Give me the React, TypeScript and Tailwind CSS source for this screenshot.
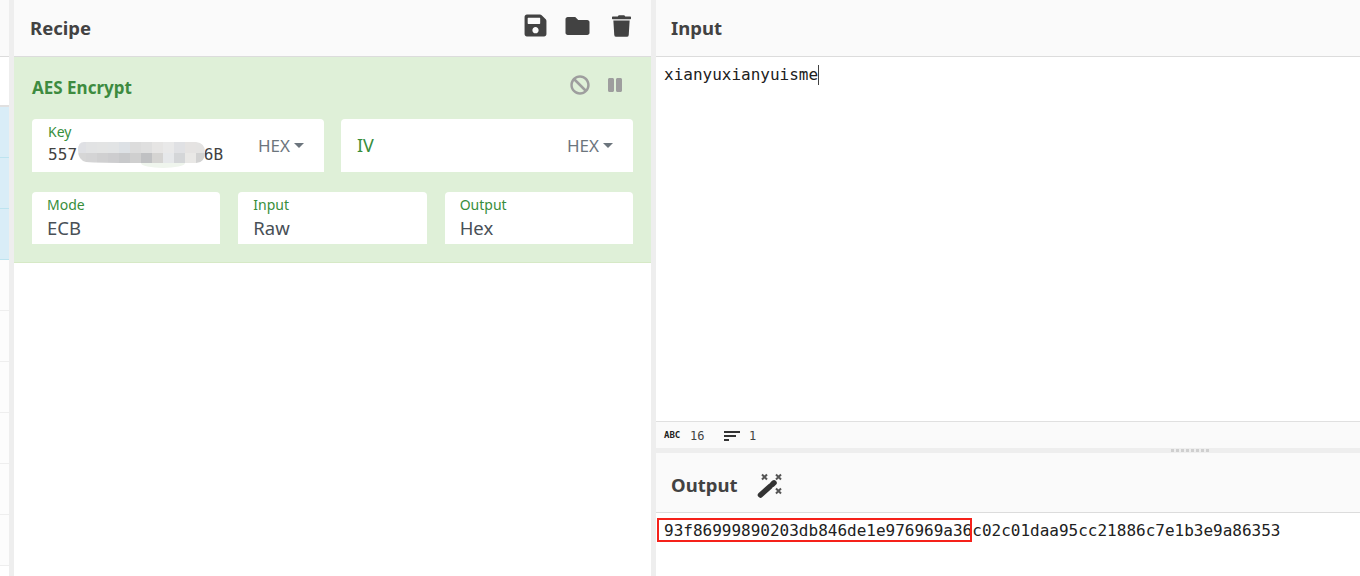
import React from "react";
import { FaSave, FaFolder, FaTrash, FaBan, FaPause } from "react-icons/fa";

const noto = "[font-family:'Noto_Sans','Open_Sans',sans-serif]";
const mono = "[font-family:'DejaVu_Sans_Mono','Liberation_Mono',monospace]";

function Field({ label, value }: { label: string; value: string }) {
  return (
    <div className="flex-1 h-[52px] bg-white rounded-t-[4px] pl-[15px] pt-[3px]">
      <div className="text-[14px] leading-[20px] text-[#388e3c]">{label}</div>
      <div className="text-[18.5px] leading-[26px] text-[#495057]">{value}</div>
    </div>
  );
}

function Hex() {
  return (
    <div className="flex items-center gap-[4px] text-[17px] text-[#6c757d]">
      HEX
      <span className="w-0 h-0 border-x-[5px] border-x-transparent border-t-[5px] border-t-[#6c757d]" />
    </div>
  );
}

function Head({ children, h }: { children: React.ReactNode; h: string }) {
  return (
    <div className={`${h} shrink-0 bg-[#fafafa] border-b border-[#dcdcdc] flex items-center text-[18.5px] font-bold text-[#424242]`}>
      {children}
    </div>
  );
}

const topCells = ["#dfe0e4", "#e2e3e4", "#e3e4e4", "#e2e4e5", "#dde1e5", "#dcdcdc", "#dfdfdf", "#e6e5e4", "#e9e9e9", "#e0e1e4", "#e5e3e2", "#e4e3e2"];
const lowCells = ["#d6d6d6", "#d4d4d5", "#d0d0d1", "#cdcdcf", "#c8c9cb", "#cfcfcf", "#c0c1c3", "#d5d4d2", "#e6e8ea", "#d4d6d8", "#e9e8e6", "#d2d2d2"];

function Mosaic() {
  return (
    <svg className="absolute left-[46px] top-[23px]" width="127" height="26" viewBox="0 0 127 26">
      <ellipse cx="85" cy="21" rx="22" ry="5" fill="#eff5ed" />
      <clipPath id="mosaic-clip">
        <path d="M6 0H118Q127 1 127 10Q127 21 118 21H60Q20 21 8 20Q0 18 0 8Q0 0 6 0Z" />
      </clipPath>
      <g clipPath="url(#mosaic-clip)">
        {topCells.map((c, i) => (
          <rect key={i} x={i * 11 - 3} y="0" width="11" height="11" fill={c} />
        ))}
        {lowCells.map((c, i) => (
          <rect key={i} x={i * 11 - 3} y="11" width="11" height="11" fill={c} />
        ))}
      </g>
    </svg>
  );
}

function Wand() {
  const star = (x: number, y: number) => (
    <path d={`M${x - 2.5} ${y - 2.5}L${x + 2.5} ${y + 2.5}M${x + 2.5} ${y - 2.5}L${x - 2.5} ${y + 2.5}`} stroke="#555555" strokeWidth="2" />
  );
  return (
    <svg className="ml-[20px]" width="26" height="26" viewBox="0 0 26 26">
      {star(7.5, 5)}
      {star(21.5, 5)}
      {star(21.5, 19)}
      <path d="M3.5 23L13 14.5" stroke="#333333" strokeWidth="5.5" strokeLinecap="round" />
      <path d="M15.5 12.2L17 10.8" stroke="#333333" strokeWidth="5.5" strokeLinecap="round" />
    </svg>
  );
}

export default function App() {
  const rows = [true, true, true, false, false, false, false, false, false];
  const dots = [0, 1, 2, 3, 4, 5, 6, 7];
  return (
    <div className={`${noto} w-[1360px] h-[576px] overflow-hidden flex bg-white`}>
      <div className="w-[9px] flex flex-col">
        <div className="h-[57px] shrink-0 bg-[#fafafa] border-b border-[#dcdcdc]" />
        <div className="h-[50px] shrink-0 bg-white border-b-[2px] border-[#e0e0e0]" />
        {rows.map((blue, i) => (
          <div
            key={i}
            className={`h-[51px] shrink-0 border-b ${blue ? "bg-[#d9edf7] border-[#bde3ef]" : "bg-[#fcfcfc] border-[#eeeeee]"}`}
          />
        ))}
      </div>
      <div className="w-[5px] bg-[#eeeeee]" />
      <div className="w-[637px] flex flex-col">
        <Head h="h-[57px] pl-[16px]">
          <span className="flex-1">Recipe</span>
          <div className="flex items-center pr-[20px] mb-[5px]">
            <FaSave className="w-[25px] h-[25px] text-[#424242]" />
            <FaFolder className="ml-[16px] w-[27px] h-[24px] text-[#424242]" />
            <FaTrash className="ml-[21px] w-[19px] h-[24px] text-[#424242]" />
          </div>
        </Head>
        <div className="h-[206px] shrink-0 bg-[#dff0d8] border-b border-[#d6e9c6] px-[18px] pt-[16px]">
          <div className="h-[30px] flex items-center">
            <span className="flex-1 text-[17px] font-bold text-[#3d8b40]">AES Encrypt</span>
            <div className="flex items-center gap-[18px] pr-[11px] mb-[6px] text-[#9e9e9e]">
              <FaBan className="w-[20px] h-[20px]" />
              <FaPause className="w-[14px] h-[16px]" />
            </div>
          </div>
          <div className="flex gap-[17px] mt-[16px]">
            <div className="relative flex-1 h-[53px] bg-white rounded-t-[4px] flex items-center justify-between pl-[16px] pr-[20px]">
              <div className="self-start pt-[6px]">
                <div className="text-[14px] leading-[14px] text-[#388e3c]">Key</div>
                <div className={`${mono} text-[16px] leading-[20px] mt-[6px] text-[#424242] whitespace-pre tracking-[0.1px]`}>
                  {"557             6B"}
                </div>
              </div>
              <Hex />
              <Mosaic />
            </div>
            <div className="flex-1 h-[53px] bg-white rounded-t-[4px] flex items-center justify-between pl-[16px] pr-[20px]">
              <span className="text-[18px] text-[#388e3c]">IV</span>
              <Hex />
            </div>
          </div>
          <div className="flex gap-[18px] mt-[20px]">
            <Field label="Mode" value="ECB" />
            <Field label="Input" value="Raw" />
            <Field label="Output" value="Hex" />
          </div>
        </div>
        <div className="flex-1 bg-white" />
      </div>
      <div className="w-[5px] bg-[#eeeeee]" />
      <div className="flex-1 flex flex-col min-w-0">
        <Head h="h-[57px] pl-[15px]">Input</Head>
        <div className="h-[364px] shrink-0 px-[8px] pt-[8px]">
          <div className={`${mono} text-[16px] leading-[20px] text-[#212121] flex`}>
            xianyuxianyuisme
            <span className="w-px h-[20px] bg-[#424242]" />
          </div>
        </div>
        <div className={`${mono} h-[27px] shrink-0 border-t border-[#e0e0e0] bg-[#fafafa] flex items-center pl-[8px] pt-[2px] text-[12px] text-[#424242]`}>
          <span className="text-[9px] font-bold w-[26px] text-[#212121]">ABC</span>
          <span className="w-[18px]">16</span>
          <svg className="ml-[16px]" width="16" height="12" viewBox="0 0 16 12">
            <path d="M0 1h16v2H0zM0 5h12v2H0zM0 9h5v2H0z" fill="#333333" />
          </svg>
          <span className="ml-[9px]">1</span>
        </div>
        <div className="h-[5px] shrink-0 bg-[#eeeeee] flex items-center gap-[2px] pl-[515px]">
          {dots.map((d) => (
            <span key={d} className="w-[3px] h-[3px] bg-[#cfcfcf]" />
          ))}
        </div>
        <Head h="h-[60px] pl-[15px] pt-[5px]">
          <span>Output</span>
          <Wand />
        </Head>
        <div className="relative flex-1 px-[8px] pt-[8px]">
          <div className={`${mono} text-[16px] leading-[20px] text-[#212121] whitespace-nowrap`}>
            93f86999890203db846de1e976969a36c02c01daa95cc21886c7e1b3e9a86353
          </div>
          <div className="absolute left-[1px] top-[5px] w-[315px] h-[24px] border-2 border-[#f5211a]" />
        </div>
      </div>
    </div>
  );
}
